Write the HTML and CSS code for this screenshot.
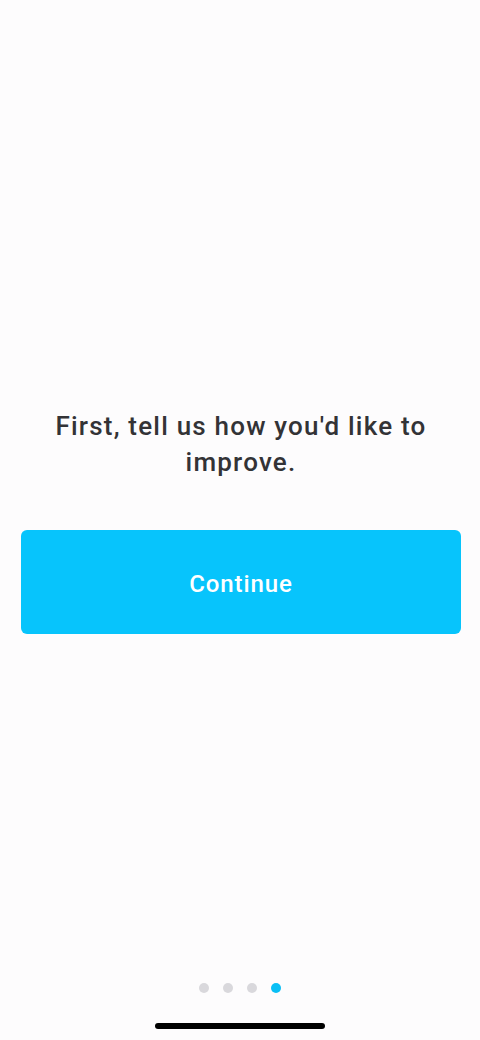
FILE: index.html
```html
<!DOCTYPE html>
<html lang="en">
<head>
    <meta charset="UTF-8">
    <meta name="viewport" content="width=device-width, initial-scale=1.0">
    <title>Onboarding</title>
    <link rel="stylesheet" href="styles.css">
</head>
<body>
    <div class="screen">
        <div class="content">
            <h1 class="prompt">First, tell us how you'd like to improve.</h1>
            <button class="continue-btn">Continue</button>
        </div>
        <div class="pager">
            <span class="dot"></span>
            <span class="dot"></span>
            <span class="dot"></span>
            <span class="dot active"></span>
        </div>
        <div class="home-bar"></div>
    </div>
</body>
</html>
```

FILE: styles.css
```css
body {
    margin: 0;
    font-family: 'Roboto', 'Liberation Sans', sans-serif;
    background-color: #fdfcfd;
    color: #333336;
}

.screen {
    height: 1040px;
    display: flex;
    flex-direction: column;
    align-items: center;
}

.content {
    width: 100%;
    box-sizing: border-box;
    padding: 408px 19px 0 21px;
}

.prompt {
    margin: 0 0 50px;
    text-align: center;
    font-size: 26px;
    font-weight: 500;
    line-height: 36px;
    letter-spacing: 1.2px;
    padding: 0 20px;
}

.continue-btn {
    display: block;
    width: 100%;
    height: 104px;
    padding: 4px 0 0;
    border: none;
    border-radius: 6px;
    background-color: #07c4fc;
    color: white;
    font-family: inherit;
    font-size: 24px;
    font-weight: 500;
    letter-spacing: 0.9px;
    cursor: pointer;
}

.pager {
    margin-top: auto;
    display: flex;
    gap: 14px;
}

.dot {
    width: 10px;
    height: 10px;
    border-radius: 50%;
    background-color: #d9d8dc;
}

.dot.active {
    background-color: #0abff5;
}

.home-bar {
    width: 170px;
    height: 6px;
    border-radius: 3px;
    background-color: #000;
    margin: 30px 0 11px;
}
```
